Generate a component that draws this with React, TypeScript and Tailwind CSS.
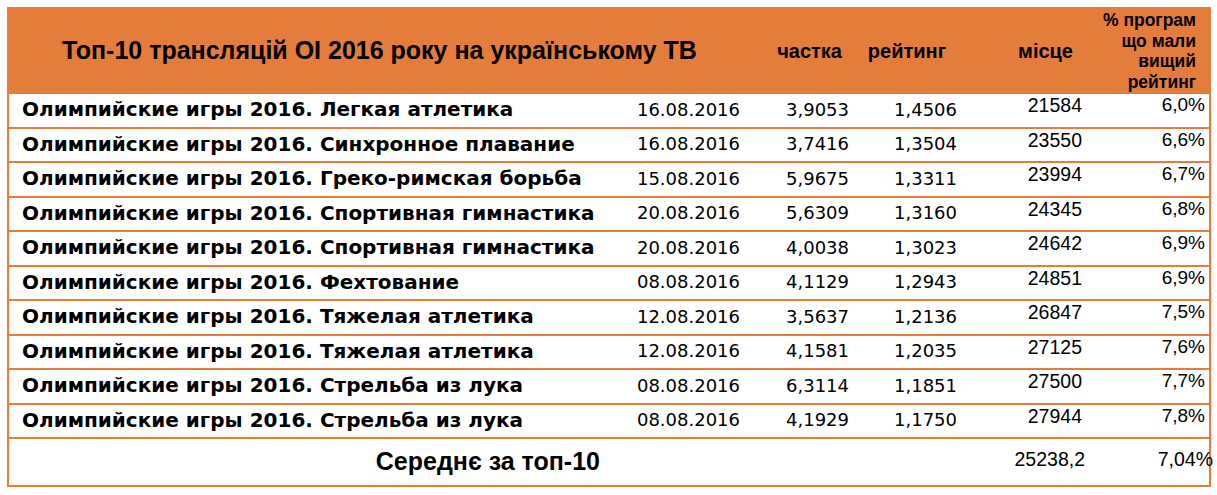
import React from "react";

const rows = [
  ["Олимпийские игры 2016. Легкая атлетика", "16.08.2016", "3,9053", "1,4506", "21584", "6,0%"],
  ["Олимпийские игры 2016. Синхронное плавание", "16.08.2016", "3,7416", "1,3504", "23550", "6,6%"],
  ["Олимпийские игры 2016. Греко-римская борьба", "15.08.2016", "5,9675", "1,3311", "23994", "6,7%"],
  ["Олимпийские игры 2016. Спортивная гимнастика", "20.08.2016", "5,6309", "1,3160", "24345", "6,8%"],
  ["Олимпийские игры 2016. Спортивная гимнастика", "20.08.2016", "4,0038", "1,3023", "24642", "6,9%"],
  ["Олимпийские игры 2016. Фехтование", "08.08.2016", "4,1129", "1,2943", "24851", "6,9%"],
  ["Олимпийские игры 2016. Тяжелая атлетика", "12.08.2016", "3,5637", "1,2136", "26847", "7,5%"],
  ["Олимпийские игры 2016. Тяжелая атлетика", "12.08.2016", "4,1581", "1,2035", "27125", "7,6%"],
  ["Олимпийские игры 2016. Стрельба из лука", "08.08.2016", "6,3114", "1,1851", "27500", "7,7%"],
  ["Олимпийские игры 2016. Стрельба из лука", "08.08.2016", "4,1929", "1,1750", "27944", "7,8%"],
];

const comic = { fontFamily: "'Comic Sans MS', 'DejaVu Sans', sans-serif" };
const comicReg = { fontFamily: "'DejaVu Sans', sans-serif" };
const arial = { fontFamily: "'Liberation Sans', Arial, sans-serif" };

export default function App() {
  return (
    <div className="bg-white w-[1217px] h-[495px] pl-[7px] pt-[7px] text-black">
      <div className="w-[1204px] border-2 border-[#E47C3B] bg-white">
        {/* header */}
        <div className="flex h-[83px] bg-[#E47C3B] font-bold" style={arial}>
          <div className="w-[591px] shrink-0 flex items-center pl-[53px] pt-[1px] text-[25px] whitespace-nowrap">
            Топ-10 трансляцій ОІ 2016 року на українському ТВ
          </div>
          <div className="w-[140px] shrink-0" />
          <div className="w-[109px] shrink-0 flex items-center justify-end pr-[7px] text-[20px]">частка</div>
          <div className="w-[108px] shrink-0 flex items-center justify-end pr-[11px] text-[20px]">рейтинг</div>
          <div className="w-[125px] shrink-0 flex items-center justify-end pr-[9px] text-[20px]">місце</div>
          <div className="w-[123px] shrink-0 flex flex-col items-end justify-end pr-[9px] text-[17.5px] leading-[20.5px]">
            <span>% програм</span>
            <span>що мали</span>
            <span>вищий</span>
            <span>рейтинг</span>
          </div>
        </div>
        {/* rows */}
        {rows.map((r, i) => (
          <div key={i} className="flex h-[34.5px] border-t-2 border-[#E47C3B]">
            <div className="w-[591px] shrink-0 flex items-center pl-[13px] pb-[2px] text-[20px] font-bold whitespace-nowrap" style={comic}>
              {r[0]}
            </div>
            <div className="w-[140px] shrink-0 flex items-center justify-end pb-[2px] text-[18px]" style={comicReg}>{r[1]}</div>
            <div className="w-[109px] shrink-0 flex items-center justify-end pb-[2px] text-[18px]" style={comicReg}>{r[2]}</div>
            <div className="w-[108px] shrink-0 flex items-center justify-end pb-[2px] text-[18px]" style={comicReg}>{r[3]}</div>
            <div className="w-[125px] shrink-0 flex items-start justify-end text-[19.5px] leading-[20px] pt-[1px]" style={arial}>{r[4]}</div>
            <div className="w-[123px] shrink-0 flex items-start justify-end text-[19px] leading-[20px] pt-[1px]" style={arial}>{r[5]}</div>
          </div>
        ))}
        {/* footer */}
        <div className="flex h-[48px] border-t-2 border-[#E47C3B]" style={arial}>
          <div className="w-[591px] shrink-0 flex items-center justify-end text-[25px] font-bold whitespace-nowrap">
            Середнє за топ-10
          </div>
          <div className="w-[140px] shrink-0" />
          <div className="w-[109px] shrink-0" />
          <div className="w-[108px] shrink-0" />
          <div className="w-[128px] shrink-0 flex items-center justify-end text-[19.5px] pb-[4px]">25238,2</div>
          <div className="w-[128px] shrink-0 flex items-center justify-end text-[19.5px] pb-[4px]">7,04%</div>
        </div>
      </div>
    </div>
  );
}
